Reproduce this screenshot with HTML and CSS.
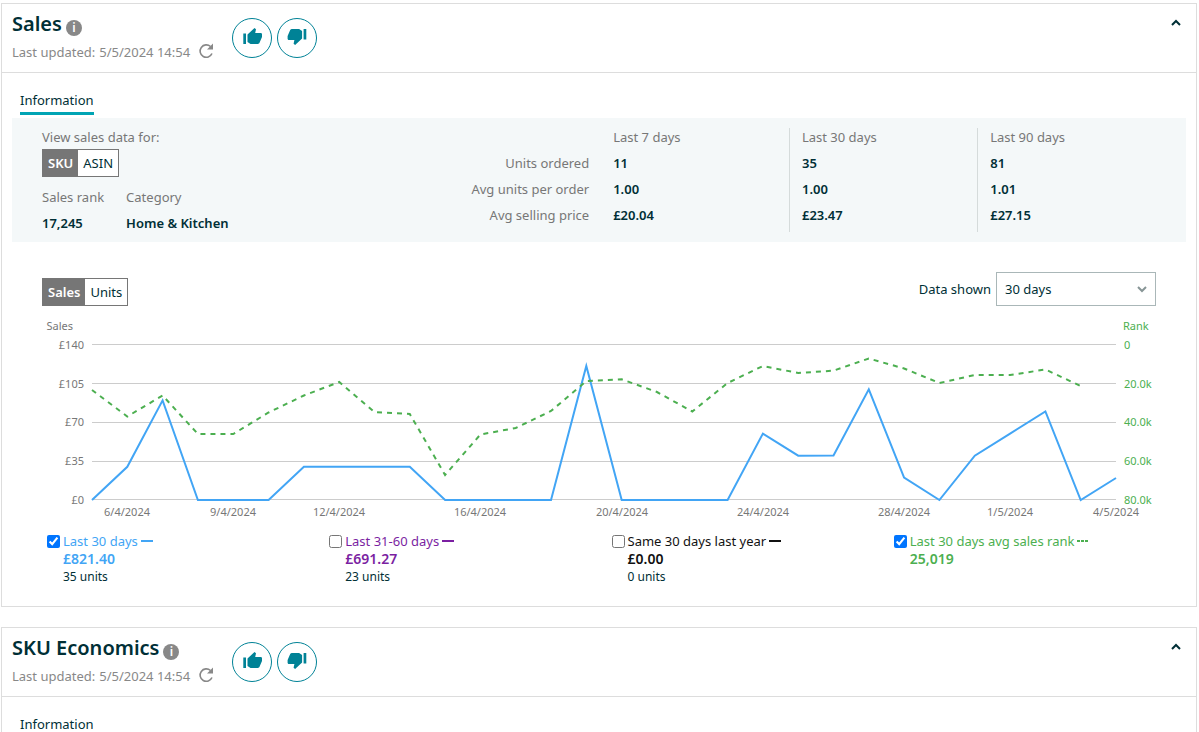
FILE: index.html
```html
<!DOCTYPE html>
<html lang="en-GB">
<head>
    <meta charset="UTF-8">
    <meta name="viewport" content="width=device-width, initial-scale=1.0">
    <title>Sales</title>
    <link rel="stylesheet" href="styles.css">
</head>
<body>
    <!-- shared icons -->
    <svg class="sprite" aria-hidden="true">
        <symbol id="thumb-up" viewBox="0 0 20 20">
            <path d="M1.300 5.500H4V16H1.300zM5.500 6.500L12.500 0L14 1.300L13.200 5H19.300L20 6V9L17.300 15.200L16 16H8.500L5.500 14z"/>
        </symbol>
        <symbol id="thumb-down" viewBox="0 0 20 20">
            <path transform="rotate(180 10.300 8.500)" d="M1.300 5.500H4V16H1.300zM5.500 6.500L12.500 0L14 1.300L13.200 5H19.300L20 6V9L17.300 15.200L16 16H8.500L5.500 14z"/>
        </symbol>
        <symbol id="refresh" viewBox="0 0 16 16">
            <path d="M14 10.500A6.200 6.200 0 1 1 12.500 3.500" fill="none" stroke="currentColor" stroke-width="1.600"/>
            <path d="M15 0.500V6.500H9z"/>
        </symbol>
        <symbol id="chevron" viewBox="0 0 12 8">
            <path d="M2 6l4-4 4 4" fill="none" stroke="currentColor" stroke-width="2"/>
        </symbol>
    </svg>

    <section class="card">
        <header class="card-header">
            <div class="heading">
                <h2>Sales <button class="info" type="button" aria-label="About Sales">i</button></h2>
                <p class="updated">Last updated: <span>5/5/2024 14:54</span>
                    <button class="refresh" type="button" aria-label="Refresh"><svg><use href="#refresh"/></svg></button>
                </p>
            </div>
            <div class="feedback">
                <button type="button" aria-label="Helpful"><svg><use href="#thumb-up"/></svg></button>
                <button type="button" aria-label="Not helpful"><svg><use href="#thumb-down"/></svg></button>
            </div>
            <button class="collapse" type="button" aria-label="Collapse"><svg><use href="#chevron"/></svg></button>
        </header>

        <nav class="tabs"><a class="active" href="#sales">Information</a></nav>

        <div class="summary" id="sales">
            <div class="product">
                <p>View sales data for:</p>
                <div class="toggle">
                    <button class="on" type="button">SKU</button>
                    <button type="button">ASIN</button>
                </div>
                <dl class="rank">
                    <div><dt>Sales rank</dt><dd>17,245</dd></div>
                    <div><dt>Category</dt><dd>Home &amp; Kitchen</dd></div>
                </dl>
            </div>
            <table class="stats">
                <thead>
                    <tr><td></td><th scope="col">Last 7 days</th><th scope="col">Last 30 days</th><th scope="col">Last 90 days</th></tr>
                </thead>
                <tbody>
                    <tr><th scope="row">Units ordered</th><td>11</td><td>35</td><td>81</td></tr>
                    <tr><th scope="row">Avg units per order</th><td>1.00</td><td>1.00</td><td>1.01</td></tr>
                    <tr><th scope="row">Avg selling price</th><td>£20.04</td><td>£23.47</td><td>£27.15</td></tr>
                </tbody>
            </table>
        </div>

        <div class="chart">
            <div class="chart-bar">
                <div class="toggle">
                    <button class="on" type="button">Sales</button>
                    <button type="button">Units</button>
                </div>
                <div class="range">
                    <label for="range">Data shown</label>
                    <span class="select">
                        <select id="range">
                            <option>30 days</option>
                            <option>60 days</option>
                            <option>90 days</option>
                        </select>
                        <svg><use href="#chevron"/></svg>
                    </span>
                </div>
            </div>
            <svg class="plot" viewBox="0 0 1114 206" role="img" aria-label="Sales and sales rank by day">
                <path class="grid" d="M50 28.500H1074M50 67.500H1074M50 106.500H1074M50 145.500H1074M50 183.500H1074"/>
                <g class="axis left">
                    <text x="31" y="14">Sales</text>
                    <text x="42" y="33">£140</text>
                    <text x="42" y="72">£105</text>
                    <text x="42" y="110">£70</text>
                    <text x="42" y="149">£35</text>
                    <text x="42" y="188">£0</text>
                </g>
                <g class="axis right">
                    <text x="1081" y="14">Rank</text>
                    <text x="1082" y="33">0</text>
                    <text x="1082" y="72">20.0k</text>
                    <text x="1082" y="110">40.0k</text>
                    <text x="1082" y="149">60.0k</text>
                    <text x="1082" y="188">80.0k</text>
                </g>
                <g class="axis dates">
                    <text x="85" y="200">6/4/2024</text>
                    <text x="191" y="200">9/4/2024</text>
                    <text x="297" y="200">12/4/2024</text>
                    <text x="438" y="200">16/4/2024</text>
                    <text x="580" y="200">20/4/2024</text>
                    <text x="721" y="200">24/4/2024</text>
                    <text x="862" y="200">28/4/2024</text>
                    <text x="968" y="200">1/5/2024</text>
                    <text x="1074" y="200">4/5/2024</text>
                </g>
                <polyline class="line sales" points="50,184 85.3,150.800 120.600,84.400 155.900,184 191.200,184 226.600,184 261.900,150.800 297.200,150.800 332.500,150.800 367.800,150.800 403.100,184 438.400,184 473.700,184 509,184 544.300,50 579.700,184 615,184 650.300,184 685.600,184 720.900,117.600 756.200,139.700 791.500,139.500 826.800,73.300 862.100,161.500 897.400,184 932.800,139.700 968.100,117.600 1003.400,95.500 1038.700,184 1074,162"/>
                <polyline class="line rank-line" points="50,74 85.300,100.500 120.600,79.500 155.900,118 191.200,118 226.600,96.500 261.900,79.500 297.200,66 332.500,96 367.800,98 403.100,159 438.400,118.500 473.700,112 509,95 544.300,65 579.700,63.300 615,76 650.300,95.500 685.600,67 720.900,50 756.200,57 791.500,54.700 826.800,42.500 862.100,52.500 897.400,67 932.800,59 968.100,59 1003.400,53.500 1038.700,70"/>
            </svg>
        </div>

        <div class="legend">
            <div class="series blue">
                <input type="checkbox" id="last30" checked>
                <label for="last30">Last 30 days</label><i></i>
                <strong>£821.40</strong>
                <span>35 units</span>
            </div>
            <div class="series purple">
                <input type="checkbox" id="last60">
                <label for="last60">Last 31-60 days</label><i></i>
                <strong>£691.27</strong>
                <span>23 units</span>
            </div>
            <div class="series black">
                <input type="checkbox" id="lastYear">
                <label for="lastYear">Same 30 days last year</label><i></i>
                <strong>£0.00</strong>
                <span>0 units</span>
            </div>
            <div class="series green">
                <input type="checkbox" id="avgRank" checked>
                <label for="avgRank">Last 30 days avg sales rank</label><i></i>
                <strong>25,019</strong>
            </div>
        </div>
    </section>

    <section class="card">
        <header class="card-header">
            <div class="heading">
                <h2>SKU Economics <button class="info" type="button" aria-label="About SKU Economics">i</button></h2>
                <p class="updated">Last updated: <span>5/5/2024 14:54</span>
                    <button class="refresh" type="button" aria-label="Refresh"><svg><use href="#refresh"/></svg></button>
                </p>
            </div>
            <div class="feedback">
                <button type="button" aria-label="Helpful"><svg><use href="#thumb-up"/></svg></button>
                <button type="button" aria-label="Not helpful"><svg><use href="#thumb-down"/></svg></button>
            </div>
            <button class="collapse" type="button" aria-label="Collapse"><svg><use href="#chevron"/></svg></button>
        </header>
        <nav class="tabs"><a class="active" href="#economics">Information</a></nav>
    </section>
</body>
</html>
```
FILE: styles.css
```css
* {
    box-sizing: border-box;
}

html {
    overflow: hidden;
}

body {
    margin: 3px 2px 0 1px;
    background: #ffffff;
    color: #002f36;
    font-family: "Noto Sans", "Open Sans", sans-serif;
    font-size: 13px;
    line-height: 18px;
}

h2, p, dl, dd {
    margin: 0;
}

button {
    padding: 0;
    border: none;
    background: none;
    color: inherit;
    font: inherit;
    cursor: pointer;
}

svg {
    display: block;
    fill: currentColor;
}

.sprite {
    display: none;
}

.card {
    margin-bottom: 20px;
    border: 1px solid #dddddd;
}

/* header */
.card-header {
    display: flex;
    height: 69px;
    padding: 0 14px 0 10px;
    border-bottom: 1px solid #dddddd;
}

.heading {
    width: 220px;
    padding-top: 6px;
}

h2 {
    display: flex;
    align-items: center;
    gap: 4px;
    font-size: 20px;
    font-weight: 600;
    line-height: 28px;
    white-space: nowrap;
}

.info {
    width: 16px;
    height: 16px;
    margin-top: 8px;
    border-radius: 50%;
    background: #888888;
    color: #ffffff;
    font-size: 12px;
    line-height: 16px;
}

.updated {
    display: flex;
    align-items: center;
    gap: 4px;
    height: 28px;
    color: #888888;
}

.refresh {
    margin-left: 4px;
    padding-bottom: 2px;
}

.refresh svg {
    width: 16px;
    height: 16px;
}

.feedback {
    display: flex;
    gap: 5px;
    padding-top: 14px;
}

.feedback button {
    display: grid;
    place-items: center;
    width: 40px;
    height: 40px;
    border: 1px solid #008296;
    border-radius: 50%;
    color: #008296;
}

.feedback svg {
    width: 20px;
    height: 20px;
}

.collapse {
    align-self: flex-start;
    margin: 15px 0 0 auto;
}

.collapse svg {
    width: 12px;
    height: 8px;
}

/* tabs */
.tabs {
    display: flex;
    padding: 18px 18px 3px;
}

.tabs a {
    padding-bottom: 3px;
    border-bottom: 3px solid #00a4b4;
    color: #002f36;
    text-decoration: none;
}

/* summary panel */
.summary {
    display: flex;
    align-items: flex-start;
    justify-content: space-between;
    margin: 0 10px;
    padding: 10px 20px 6px 30px;
    background: #f4f8f9;
    color: #777777;
}

.toggle {
    display: inline-flex;
    border: 1px solid #767676;
    background: #ffffff;
    color: #002f36;
}

.toggle button {
    height: 26px;
    padding: 0 5px;
}

.toggle .on {
    background: #767676;
    color: #ffffff;
    font-weight: 600;
}

.product p {
    padding-bottom: 3px;
}

.rank {
    display: flex;
    gap: 22px;
    margin-top: 7px;
    line-height: 26px;
}

.rank dd {
    color: #002f36;
    font-weight: 600;
}

.stats {
    width: 67%;
    border-collapse: collapse;
    table-layout: fixed;
}

.stats th, .stats td {
    padding: 4px 12px;
    font-weight: 400;
    text-align: left;
}

.stats thead th {
    padding-top: 0;
}

.stats tbody th {
    text-align: right;
}

.stats tbody td {
    color: #002f36;
    font-weight: 600;
}

.stats tr:last-child td {
    padding-bottom: 8px;
}

.stats thead td, .stats thead tr:last-child td {
    padding: 0;
}

.stats tbody tr {
    vertical-align: top;
}

.stats th:nth-child(n+3), .stats td:nth-child(n+3) {
    border-left: 1px solid #d5dbdb;
}

/* chart */
.chart {
    padding: 30px 40px 0;
}

.chart-bar {
    display: flex;
    align-items: flex-end;
    justify-content: space-between;
}

.range {
    display: flex;
    align-items: center;
    gap: 5px;
}

.select {
    display: grid;
    align-items: center;
}

.select select, .select svg {
    grid-area: 1 / 1;
}

.select select {
    width: 160px;
    height: 34px;
    padding: 0 8px;
    border: 1px solid #aab7b8;
    border-radius: 0;
    appearance: none;
    background: #ffffff;
    color: #002f36;
    font: inherit;
}

.select svg {
    justify-self: end;
    width: 12px;
    height: 8px;
    margin-right: 8px;
    color: #879596;
    transform: rotate(180deg);
    pointer-events: none;
}

.plot {
    width: 100%;
    margin-top: 10px;
}

.grid {
    fill: none;
    stroke: #cccccc;
}

.axis {
    fill: #777777;
    font-size: 11px;
}

.left {
    text-anchor: end;
}

.right {
    fill: #4caf50;
}

.dates {
    text-anchor: middle;
}

.line {
    fill: none;
    stroke-width: 2;
}

.sales {
    stroke: #42a5f5;
}

.rank-line {
    stroke: #4caf50;
    stroke-dasharray: 5 5;
}

/* legend */
.legend {
    display: grid;
    grid-template-columns: repeat(4, 1fr);
    padding: 10px 20px 20px 45px;
}

.series {
    display: grid;
    grid-template-columns: 13px auto 12px;
    grid-template-rows: repeat(3, 18px);
    justify-content: start;
    align-items: center;
    column-gap: 3px;
}

.series input {
    width: 13px;
    height: 13px;
    margin: 0;
}

.series i {
    height: 2px;
    background: currentColor;
}

.series strong, .series span {
    grid-column: 2 / -1;
}

.series strong {
    font-size: 14px;
    font-weight: 600;
}

.series span {
    color: #002f36;
    font-size: 12px;
}

.blue {
    color: #42a5f5;
}

.purple {
    color: #7b1fa2;
}

.black {
    color: #111111;
}

.green {
    color: #4caf50;
}

.green i {
    background: repeating-linear-gradient(90deg, currentColor 0 3px, transparent 3px 4px);
}
```
